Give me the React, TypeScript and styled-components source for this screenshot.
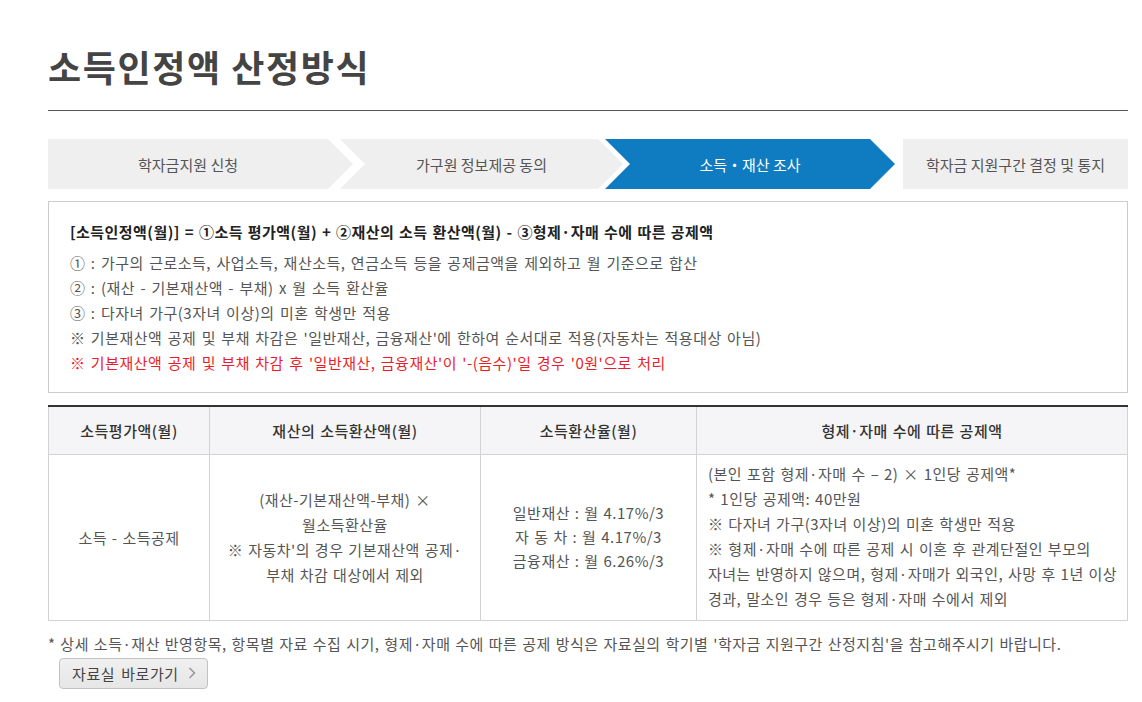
import React from "react";
import styled, { createGlobalStyle } from "styled-components";

const Global = createGlobalStyle`
  html, body { margin: 0; padding: 0; background: #fff; }
  body { font-family: "Noto Sans CJK KR", "Noto Sans", sans-serif; color: #555; }
  * { box-sizing: border-box; }
`;

const Page = styled.div`
  padding: 41px 14px 0 48px;
  width: 1142px;
`;

const Title = styled.h1`
  margin: 0;
  font-size: 36px;
  line-height: 50px;
  font-weight: 700;
  color: #444;
  padding-bottom: 19px;
  border-bottom: 1px solid #55555f;
  letter-spacing: 1.6px;
`;

const Steps = styled.ol`
  list-style: none;
  margin: 28px 0 0;
  padding: 0;
  display: flex;
  height: 50px;
`;

type Shape = "first" | "mid" | "last";

const clip: Record<Shape, string> = {
  first: "polygon(0 0, calc(100% - 25px) 0, 100% 50%, calc(100% - 25px) 100%, 0 100%)",
  mid: "polygon(0 0, calc(100% - 25px) 0, 100% 50%, calc(100% - 25px) 100%, 0 100%, 25px 50%)",
  last: "none",
};

const Step = styled.li<{ $shape: Shape; $w?: number; $ml: number; $active?: boolean }>`
  flex: ${(p) => (p.$w ? `0 0 ${p.$w}px` : "1 1 auto")};
  margin-left: ${(p) => p.$ml}px;
  height: 50px;
  display: flex;
  align-items: center;
  justify-content: center;
  padding: ${(p) => (p.$shape === "first" ? "0 25px 0 0" : p.$shape === "mid" ? "0 25px" : "0")};
  background: ${(p) => (p.$active ? "#0f7bc1" : "#efefef")};
  color: ${(p) => (p.$active ? "#fff" : "#555")};
  clip-path: ${(p) => clip[p.$shape]};
  font-size: 15px;
  letter-spacing: 0;
`;

const InfoBox = styled.div`
  margin-top: 12px;
  border: 1px solid #ccc;
  padding: 17px 21px 17px 21px;
  font-size: 15px;
  line-height: 25px;
  letter-spacing: 0.5px;
  word-spacing: 1.5px;
`;

const Formula = styled.p`
  margin: 0 0 6px;
  font-weight: 700;
  color: #222;
  letter-spacing: 0.45px;
  word-spacing: 1px;
`;

const InfoLine = styled.p<{ $red?: boolean }>`
  margin: 0;
  color: ${(p) => (p.$red ? "#ee1c2a" : "#555")};
`;

const Table = styled.table`
  margin-top: 12px;
  width: 100%;
  border-collapse: collapse;
  border-top: 2px solid #333;
  font-size: 15px;
  letter-spacing: 0.5px;
  word-spacing: 1px;
`;

const Th = styled.th<{ $w?: number }>`
  width: ${(p) => (p.$w ? `${p.$w}px` : "auto")};
  height: 48px;
  background: #f5f5f7;
  border: 1px solid #d2d2d2;
  border-top: none;
  font-weight: 500;
  color: #333;
  text-align: center;
  padding: 0;
`;

const Td = styled.td<{ $left?: boolean }>`
  height: 166px;
  border: 1px solid #d2d2d2;
  color: #555;
  text-align: ${(p) => (p.$left ? "left" : "center")};
  vertical-align: middle;
  padding: ${(p) => (p.$left ? "4px 4px 6px 11px" : "0 4px")};
  line-height: 25px;
`;

const RateLines = styled.div`
  line-height: 24px;
`;

const Note = styled.p`
  margin: 10px 0 0;
  font-size: 15px;
  line-height: 25px;
  color: #555;
  letter-spacing: 0.5px;
  word-spacing: 1px;
`;

const LinkButton = styled.a`
  margin: 2px 0 0 11px;
  display: inline-flex;
  align-items: center;
  gap: 9px;
  height: 31px;
  padding: 0 11px 0 12px;
  border: 1px solid #c2c2c2;
  border-radius: 4px;
  background: linear-gradient(#f0f0f0, #e6e6e6);
  color: #444;
  font-size: 15px;
  letter-spacing: 0.6px;
  word-spacing: 2px;
  text-decoration: none;
`;

const Chevron = styled.svg`
  width: 8px;
  height: 12px;
  display: block;
`;

export default function App() {
  return (
    <>
      <Global />
      <Page>
        <Title>소득인정액 산정방식</Title>
        <Steps>
          <Step $shape="first" $w={305} $ml={0}>학자금지원 신청</Step>
          <Step $shape="mid" $w={283} $ml={-13}>가구원 정보제공 동의</Step>
          <Step $shape="mid" $w={290} $ml={-18} $active>소득・재산 조사</Step>
          <Step $shape="last" $ml={8}>학자금 지원구간 결정 및 통지</Step>
        </Steps>
        <InfoBox>
          <Formula>[소득인정액(월)] = ①소득 평가액(월) + ②재산의 소득 환산액(월) - ③형제·자매 수에 따른 공제액</Formula>
          <InfoLine>① : 가구의 근로소득, 사업소득, 재산소득, 연금소득 등을 공제금액을 제외하고 월 기준으로 합산</InfoLine>
          <InfoLine>② : (재산 - 기본재산액 - 부채) x 월 소득 환산율</InfoLine>
          <InfoLine>③ : 다자녀 가구(3자녀 이상)의 미혼 학생만 적용</InfoLine>
          <InfoLine>※ 기본재산액 공제 및 부채 차감은 '일반재산, 금융재산'에 한하여 순서대로 적용(자동차는 적용대상 아님)</InfoLine>
          <InfoLine $red>※ 기본재산액 공제 및 부채 차감 후 '일반재산, 금융재산'이 '-(음수)'일 경우 '0원'으로 처리</InfoLine>
        </InfoBox>
        <Table>
          <thead>
            <tr>
              <Th $w={161}>소득평가액(월)</Th>
              <Th $w={271}>재산의 소득환산액(월)</Th>
              <Th $w={216}>소득환산율(월)</Th>
              <Th>형제·자매 수에 따른 공제액</Th>
            </tr>
          </thead>
          <tbody>
            <tr>
              <Td>소득 - 소득공제</Td>
              <Td>
                (재산-기본재산액-부채) ×<br />
                월소득환산율<br />
                ※ 자동차'의 경우 기본재산액 공제·<br />
                부채 차감 대상에서 제외
              </Td>
              <Td>
                <RateLines>
                  일반재산 : 월 4.17%/3<br />
                  자 동 차 : 월 4.17%/3<br />
                  금융재산 : 월 6.26%/3
                </RateLines>
              </Td>
              <Td $left>
                (본인 포함 형제·자매 수 – 2) × 1인당 공제액*<br />
                * 1인당 공제액: 40만원<br />
                ※ 다자녀 가구(3자녀 이상)의 미혼 학생만 적용<br />
                ※ 형제·자매 수에 따른 공제 시 이혼 후 관계단절인 부모의<br />
                자녀는 반영하지 않으며, 형제·자매가 외국인, 사망 후 1년 이상<br />
                경과, 말소인 경우 등은 형제·자매 수에서 제외
              </Td>
            </tr>
          </tbody>
        </Table>
        <Note>* 상세 소득·재산 반영항목, 항목별 자료 수집 시기, 형제·자매 수에 따른 공제 방식은 자료실의 학기별 '학자금 지원구간 산정지침'을 참고해주시기 바랍니다.</Note>
        <LinkButton href="#">
          자료실 바로가기
          <Chevron viewBox="0 0 8 12">
            <path d="M1.5 1 L6.5 6 L1.5 11" fill="none" stroke="#999" strokeWidth="1.6" />
          </Chevron>
        </LinkButton>
      </Page>
    </>
  );
}
